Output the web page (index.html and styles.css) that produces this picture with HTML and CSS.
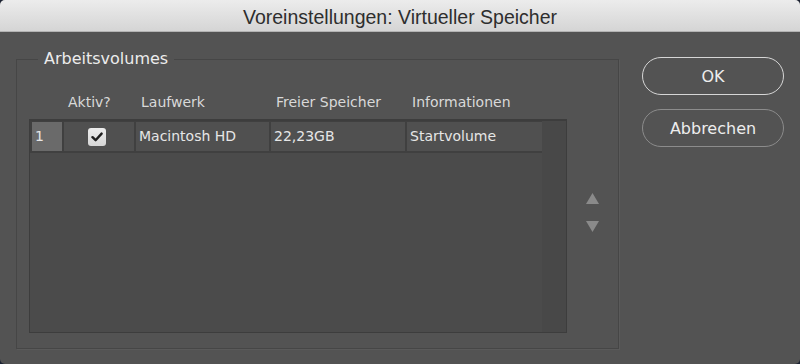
FILE: index.html
```html
<!DOCTYPE html>
<html lang="de">
<head>
<meta charset="utf-8">
<title>Voreinstellungen: Virtueller Speicher</title>
<link rel="stylesheet" href="styles.css">
</head>
<body>
<div class="window">
  <div class="titlebar">Voreinstellungen: Virtueller Speicher</div>
  <div class="content">
    <fieldset class="group">
      <legend class="legend">Arbeitsvolumes</legend>
      <div class="cols">
        <div class="tablewrap">
          <div class="header">
            <span></span>
            <span class="hd hd-aktiv">Aktiv?</span>
            <span class="hd">Laufwerk</span>
            <span class="hd">Freier Speicher</span>
            <span class="hd">Informationen</span>
          </div>
          <div class="table">
            <div class="rows">
              <div class="row">
                <div class="cell cell-num">1</div>
                <div class="cell cell-check"><span class="checkbox"><svg width="12" height="10" viewBox="0 0 12 10"><path d="M1.5 5.2 L4.6 8.2 L10.6 1.6" fill="none" stroke="#1e1e1e" stroke-width="2.4" stroke-linecap="round" stroke-linejoin="round"/></svg></span></div>
                <div class="cell">Macintosh HD</div>
                <div class="cell">22,23GB</div>
                <div class="cell">Startvolume</div>
              </div>
            </div>
            <div class="scroll"></div>
          </div>
        </div>
        <div class="arrows">
          <svg width="13" height="11" viewBox="0 0 13 11"><polygon points="6.5,0 13,11 0,11" fill="#8a8a8a"/></svg>
          <svg width="13" height="11" viewBox="0 0 13 11"><polygon points="0,0 13,0 6.5,11" fill="#8a8a8a"/></svg>
        </div>
      </div>
    </fieldset>
    <div class="buttons">
      <button class="btn btn-default">OK</button>
      <button class="btn">Abbrechen</button>
    </div>
  </div>
</div>
</body>
</html>
```
FILE: styles.css
```css
html, body {
  margin: 0;
  padding: 0;
  background: #1b2232;
}
.window {
  width: 800px;
  height: 364px;
  background: #535353;
  border-radius: 5px;
  overflow: hidden;
  display: flex;
  flex-direction: column;
  font-family: "DejaVu Sans", "Liberation Sans", sans-serif;
}
.titlebar {
  height: 31px;
  flex: none;
  background: linear-gradient(#ececec, #d5d5d5);
  border-bottom: 1px solid #b3b3b3;
  color: #2e2e2e;
  font-family: "Liberation Sans", Arial, sans-serif;
  font-size: 19.5px;
  line-height: 34px;
  text-align: center;
}
.content {
  flex: 1;
  display: flex;
  padding: 17px 16px 0 16px;
}
.group {
  margin: 0;
  padding: 0 0 13px 12px;
  width: 590px;
  height: 285px;
  border: 1px solid #464646;
  box-shadow: 1px 1px 0 #5a5a5a;
  box-sizing: content-box;
  min-width: 0;
}
.legend {
  margin-left: 9px;
  padding: 0 6px;
  font-size: 16px;
  line-height: 20px;
  color: #ececec;
}
.cols {
  display: flex;
}
.tablewrap {
  width: 538px;
}
.header {
  display: grid;
  grid-template-columns: 34px 72px 135px 136px 135px;
  margin-top: 24px;
  height: 18px;
  margin-bottom: 8px;
  font-size: 14px;
  line-height: 18px;
  color: #d9d9d9;
}
.hd { padding-left: 6px; }
.hd-aktiv { padding-left: 5px; }
.table {
  height: 211px;
  display: flex;
  border: 1px solid #3d3d3d;
  border-top: 2px solid #3d3d3d;
  background: #4b4b4b;
}
.rows {
  width: 512px;
}
.row {
  display: grid;
  grid-template-columns: 30px 70px 133px 134px 135px;
  column-gap: 2px;
  padding: 1px 0 2px 2px;
  background: #404040;
  height: 29px;
}
.cell {
  background: #505050;
  color: #e6e6e6;
  font-size: 14px;
  line-height: 29px;
  padding-left: 3px;
  white-space: nowrap;
}
.cell-num {
  background: #6a6a6a;
}
.cell-check {
  display: flex;
  align-items: center;
  justify-content: center;
  padding: 0 4px 0 0;
}
.checkbox {
  width: 18px;
  height: 18px;
  border-radius: 3px;
  background: linear-gradient(#ececec, #d6d6d6);
  display: flex;
  align-items: center;
  justify-content: center;
}
.scroll {
  flex: 1;
  background: #484848;
}
.arrows {
  width: 51px;
  display: flex;
  flex-direction: column;
  align-items: center;
  gap: 17px;
  padding-top: 124px;
}
.arrows svg { display: block; }
.buttons {
  margin-left: 23px;
  margin-top: 8px;
  display: flex;
  flex-direction: column;
  gap: 14px;
}
.btn {
  width: 142px;
  height: 38px;
  border-radius: 19px;
  border: 1px solid #8c8c8c;
  background: #535353;
  color: #ededed;
  font-family: "DejaVu Sans", "Liberation Sans", sans-serif;
  font-size: 16px;
  padding: 0;
}
.btn-default {
  border: 1.5px solid #d6d6d6;
}
```
